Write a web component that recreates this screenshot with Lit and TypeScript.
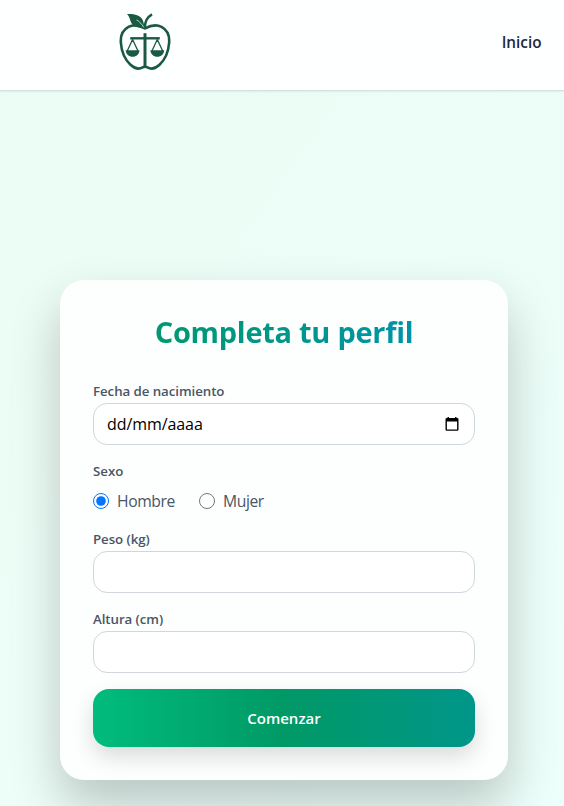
import { LitElement, html, css, svg } from "lit";
import { customElement, property } from "lit/decorators.js";

const logo = svg`
  <g fill="none" stroke="#1a5a43" stroke-linecap="round" stroke-linejoin="round">
    <path stroke-width="2.6" d="M26 15.400C20.500 12.400 14.500 11.200 9.500 13.900C3.600 17 1.300 23 1.900 30C2.500 38.500 6 46.500 11.500 51.800C16 56 20.500 56.200 23.600 54.400C25.300 53.400 26.700 53.400 28.400 54.400C31.500 56.200 36 56 40.500 51.800C46 46.500 49.500 38.500 50.100 30C50.700 23 48.400 17 42.500 13.900C37.500 11.200 31.500 12.400 26 15.400Z"/>
    <path stroke-width="2.500" stroke-linecap="butt" d="M26 15C25.600 9 28.200 4.200 33 1.400"/>
    <path stroke-width="3" stroke-linecap="butt" d="M26 20.200V54"/>
    <path stroke-width="2.400" stroke-linecap="butt" d="M11.200 25.300H40.800"/>
    <path stroke-width="1.300" d="M13.600 26.500L8.200 38M13.600 26.500L19 38M38.300 26.500L32.900 38M38.300 26.500L43.700 38"/>
  </g>
  <g fill="#1a5a43">
    <path d="M8 1C14.800 .6 20.800 2 23.400 6.400C24.800 9 24.900 12 25.500 14.600C21 15.100 15.500 14.400 12.900 10.800C10.800 7.800 11.200 4.400 8 1Z"/>
    <path d="M6.700 37.200H20.500C20.200 41.300 17.400 43.700 13.600 43.700S7 41.300 6.700 37.200Z"/>
    <path d="M31.400 37.200H45.200C44.900 41.300 42.100 43.700 38.300 43.700S31.700 41.300 31.400 37.200Z"/>
  </g>
  <path d="M17.500 6.900C20.400 8.400 22.800 11 24.800 14.400" fill="none" stroke="#fff" stroke-width=".7"/>
`;

@customElement("site-header")
class SiteHeader extends LitElement {
  static styles = css`
    :host {
      display: flex;
      align-items: center;
      justify-content: space-between;
      box-sizing: border-box;
      height: 91px;
      padding: 0 22.5px 5px 119px;
      background: rgba(255, 255, 255, 0.95);
      border-bottom: 1px solid #d6e2de;
      box-shadow: 0 1px 2px rgba(0, 0, 0, 0.07);
    }
    .logo {
      width: 53px;
      height: 59px;
      display: block;
    }
    .link {
      color: #1e2939;
      font-size: 15.3px;
      font-weight: 600;
      text-decoration: none;
      margin-bottom: 1px;
    }
  `;
  render() {
    return html`
      <svg class="logo" viewBox="0 0 53 59" aria-hidden="true">${logo}</svg>
      <a class="link" href="#">Inicio</a>
    `;
  }
}

@customElement("text-field")
class TextField extends LitElement {
  @property() label = "";
  @property() placeholder = "";
  static styles = css`
    :host {
      display: block;
      height: 64px;
    }
    .label {
      display: block;
      height: 20px;
      line-height: 20px;
      margin-bottom: 2px;
      font-size: 13.3px;
      letter-spacing: -0.07px;
      font-weight: 600;
      color: #4a5565;
    }
    .box {
      display: flex;
      align-items: center;
      justify-content: space-between;
      box-sizing: border-box;
      height: 42px;
      padding: 0 15px 0 13px;
      border: 1px solid #d1d5dc;
      border-radius: 14px;
      background: #fff;
      color: #000;
      font-size: 16px;
      letter-spacing: -0.08px;
    }
    .calendar {
      width: 14px;
      height: 14px;
      margin-bottom: 1px;
    }
  `;
  render() {
    return html`
      <span class="label">${this.label}</span>
      <div class="box">
        <span>${this.placeholder}</span>
        ${this.placeholder
          ? html`<svg class="calendar" viewBox="0 0 14 14">
              <path fill="#000" fill-rule="evenodd" d="M2.500 0h1.400v1h6.200V0h1.400v1h.7q1.300 0 1.300 1.300v10.200q0 1.300-1.300 1.300H1.800Q.5 13.800.5 12.500V2.300Q.5 1 1.800 1h.7zM1.900 4.600v7.900h10.200V4.600z"/>
            </svg>`
          : null}
      </div>
    `;
  }
}

@customElement("app-root")
class AppRoot extends LitElement {
  static styles = css`
    :host {
      display: flex;
      flex-direction: column;
      height: 806px;
      overflow: hidden;
      background: linear-gradient(to bottom right, #ebfdf4, #edfdf8 50%, #ecfffa);
      font-family: "Open Sans", "Noto Sans", sans-serif;
    }
    .main {
      padding: 189px 56px 0 60px;
    }
    .card {
      box-sizing: border-box;
      height: 500px;
      padding: 32px 33px 33px;
      border-radius: 24px;
      background: #fdfffe;
      box-shadow: 0 25px 50px rgba(0, 0, 0, 0.22);
      display: flex;
      flex-direction: column;
    }
    .title {
      margin: 0 0 29px;
      height: 40px;
      line-height: 40px;
      text-align: center;
      font-size: 29px;
      letter-spacing: -0.28px;
      font-weight: 700;
      white-space: nowrap;
      color: transparent;
      background: linear-gradient(to right, #009966, #009689, #0092b8);
      -webkit-background-clip: text;
      background-clip: text;
    }
    .sex {
      height: 52px;
      margin: 16px 0;
    }
    .legend {
      display: block;
      height: 20px;
      line-height: 20px;
      font-size: 13.3px;
      font-weight: 600;
      color: #4a5565;
    }
    .options {
      display: flex;
      gap: 24px;
      margin-top: 8px;
    }
    .option {
      display: flex;
      align-items: center;
      gap: 8px;
      height: 24px;
      font-size: 15.7px;
      letter-spacing: -0.4px;
      color: #4a5565;
    }
    .radio {
      width: 16px;
      height: 16px;
      margin: 0;
    }
    .gap {
      margin-top: 16px;
    }
    .submit {
      height: 58px;
      flex: none;
      margin-top: 16px;
      padding: 0;
      border: 0;
      border-radius: 16px;
      background: linear-gradient(to right, #00bc7d, #009966, #009689);
      box-shadow: 0 10px 22px rgba(0, 0, 0, 0.14);
      color: #fff;
      font: 600 15px "Open Sans", "Noto Sans", sans-serif;
    }
  `;
  render() {
    return html`
      <site-header></site-header>
      <main class="main">
        <form class="card">
          <h1 class="title">Completa tu perfil</h1>
          <text-field label="Fecha de nacimiento" placeholder="dd/mm/aaaa"></text-field>
          <div class="sex">
            <span class="legend">Sexo</span>
            <div class="options">
              <label class="option"><input class="radio" type="radio" name="sexo" checked /><span>Hombre</span></label>
              <label class="option"><input class="radio" type="radio" name="sexo" /><span>Mujer</span></label>
            </div>
          </div>
          <text-field label="Peso (kg)"></text-field>
          <text-field class="gap" label="Altura (cm)"></text-field>
          <button class="submit" type="button">Comenzar</button>
        </form>
      </main>
    `;
  }
}
